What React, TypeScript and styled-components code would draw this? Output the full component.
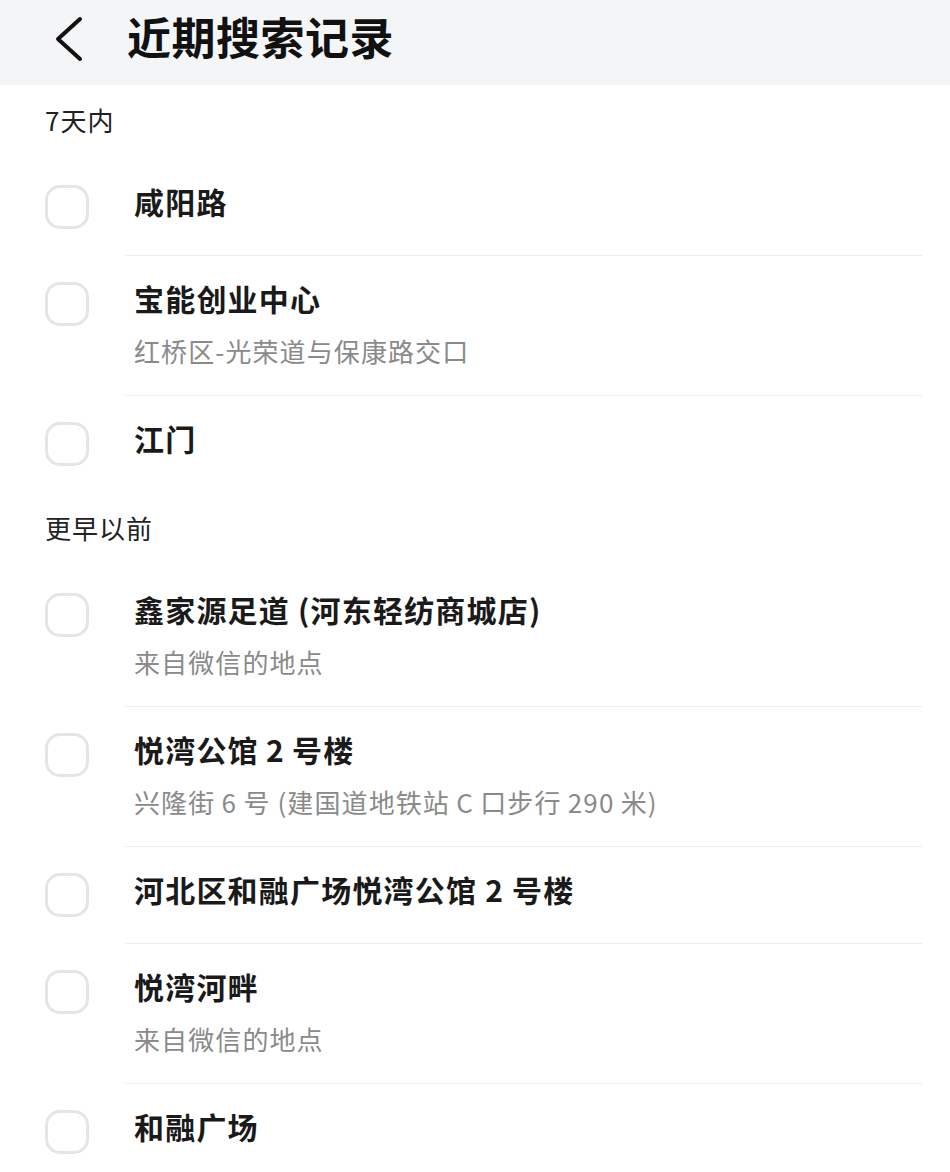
import React from 'react';
import styled, { createGlobalStyle } from 'styled-components';

const GlobalStyle = createGlobalStyle`
  html, body {
    margin: 0;
    padding: 0;
    background: #ffffff;
  }
  body {
    font-family: "Noto Sans CJK SC", "Noto Sans", sans-serif;
    -webkit-font-smoothing: antialiased;
  }
`;

const SCPage = styled.div`
  width: 950px;
  min-height: 1172px;
  background: #ffffff;
  overflow: hidden;
`;

const SCHeader = styled.div`
  display: flex;
  align-items: center;
  height: 85px;
  padding: 0 0 8px 55px;
  background: #f4f5f7;
  box-sizing: border-box;
`;

const SCBack = styled.svg`
  width: 28px;
  height: 46px;
  flex-shrink: 0;
`;

const SCTitle = styled.h1`
  margin: -6px 0 0 44px;
  font-size: 44px;
  font-weight: 700;
  line-height: 1;
  color: #111111;
  letter-spacing: 0.5px;
`;

const SCSection = styled.div`
  display: flex;
  align-items: center;
  height: 74px;
  padding: 0 0 6px 45px;
  box-sizing: border-box;
  font-size: 26px;
  letter-spacing: 1px;
  color: #222222;
`;

const SCRow = styled.div`
  display: flex;
  align-items: flex-start;
  padding-left: 45px;
`;

const SCCheck = styled.div`
  width: 38px;
  height: 38px;
  margin-top: 26px;
  border: 3px solid #e4e5e8;
  border-radius: 15px;
  flex-shrink: 0;
`;

const SCBody = styled.div<{ $sub: boolean; $last: boolean }>`
  flex: 1;
  margin-left: 36px;
  margin-right: 28px;
  padding: 20px 0 ${(p) => (p.$sub ? 24 : 32)}px 9px;
  border-bottom: 1px solid ${(p) => (p.$last ? 'transparent' : '#eeeeee')};
`;

const SCName = styled.div`
  font-size: 30px;
  font-weight: 700;
  line-height: 44px;
  letter-spacing: 1.2px;
  color: #1a1a1a;
`;

const SCSub = styled.div`
  margin-top: 11px;
  font-size: 26px;
  line-height: 40px;
  letter-spacing: 1.1px;
  color: #8a8a8a;
`;

type Item = { name: string; sub?: string };

const recent: Item[] = [
  { name: '咸阳路' },
  { name: '宝能创业中心', sub: '红桥区-光荣道与保康路交口' },
  { name: '江门' },
];

const earlier: Item[] = [
  { name: '鑫家源足道 (河东轻纺商城店)', sub: '来自微信的地点' },
  { name: '悦湾公馆\u20092\u2009号楼', sub: '兴隆街\u20096\u2009号 (建国道地铁站\u2009C\u2009口步行\u2009290\u2009米)' },
  { name: '河北区和融广场悦湾公馆 2 号楼' },
  { name: '悦湾河畔', sub: '来自微信的地点' },
  { name: '和融广场' },
];

const Rows = ({ items }: { items: Item[] }) => (
  <>
    {items.map((it, i) => (
      <SCRow key={it.name}>
        <SCCheck />
        <SCBody $sub={!!it.sub} $last={i === items.length - 1}>
          <SCName>{it.name}</SCName>
          {it.sub && <SCSub>{it.sub}</SCSub>}
        </SCBody>
      </SCRow>
    ))}
  </>
);

const App = () => {
  return (
    <SCPage>
      <GlobalStyle />
      <SCHeader>
        <SCBack viewBox="0 0 28 46">
          <polyline
            points="25,3 3,23 25,43"
            fill="none"
            stroke="#111111"
            strokeWidth="4"
            strokeLinecap="round"
            strokeLinejoin="round"
          />
        </SCBack>
        <SCTitle>近期搜索记录</SCTitle>
      </SCHeader>

      <SCSection>7天内</SCSection>
      <Rows items={recent} />

      <SCSection>更早以前</SCSection>
      <Rows items={earlier} />
    </SCPage>
  );
};

export default App;
